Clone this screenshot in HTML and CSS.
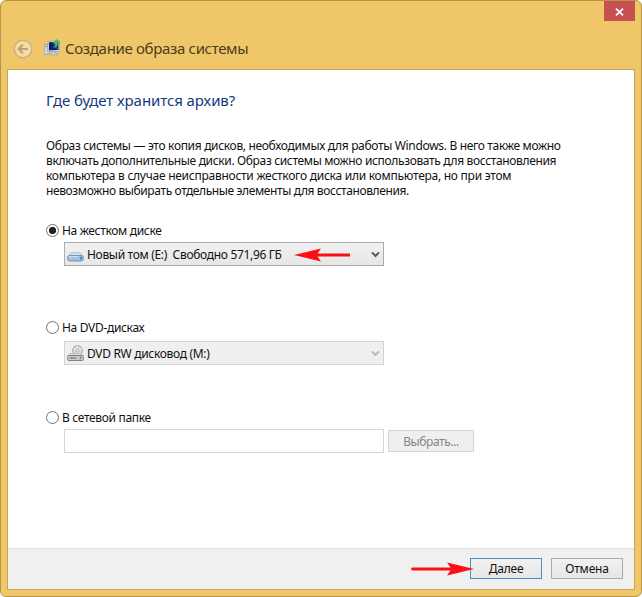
FILE: index.html
```html
<!DOCTYPE html>
<html lang="ru">
<head>
<meta charset="utf-8">
<title>Создание образа системы</title>
<link rel="stylesheet" href="styles.css">
</head>
<body>
<div class="window">
  <div class="caption">
    <button class="close" aria-label="Закрыть"><svg width="9" height="8" viewBox="0 0 9 8"><path d="M1 .7 8 7.3M8 .7 1 7.3" stroke="#fff" stroke-width="1.8"/></svg></button>
  </div>
  <header class="header">
    <svg class="back" width="20" height="20" viewBox="0 0 20 20"><circle cx="10" cy="10" r="8.8" fill="#f5dba0" stroke="#c9b184" stroke-width="1.5"/><path d="M15 10H6M9.8 5.8 5.6 10l4.2 4.2" fill="none" stroke="#b9a27a" stroke-width="2"/></svg>
    <svg class="app-icon" width="17" height="17" viewBox="0 0 17 17"><path d="M.8 5.5h3v10h-3z" fill="#dfe5e7" stroke="#8c9cab" stroke-width=".8"/><path d="M1.5 7.5h1.7" stroke="#557" stroke-width=".7"/><path d="M4 2.5 15.5 1.5v10.8L4 12.5z" fill="#dbe5ee" stroke="#8ca0b8" stroke-width=".7"/><path d="M5 3.5 14.5 2.7v8.2L5 11.2z" fill="#1538a0"/><path d="M5 3.5 9 3.2 12.5 11 5 11.2z" fill="#0b2170"/><path d="M8 12.5h3.5v2H14v1.6H5.5v-1.6H8z" fill="#c7d0d8" stroke="#8c9cab" stroke-width=".5"/><path d="M9.2 8.5C11 8 11.2 6.500 11.100 4.600H8.800L12.500.4l3.400 3.500h-2.200C13.800 7 12.500 8.800 9.200 8.500z" fill="#50c33c" stroke="#2f9634" stroke-width=".4"/></svg>
    <span class="title">Создание образа системы</span>
  </header>
  <main class="panel">
    <div class="content">
      <h1 class="heading">Где будет хранится архив?</h1>
      <p class="text">
        <span class="line l1">Образ системы — это копия дисков, необходимых для работы Windows. В него также можно</span>
        <span class="line l2">включать дополнительные диски. Образ системы можно использовать для восстановления</span>
        <span class="line l3">компьютера в случае неисправности жесткого диска или компьютера, но при этом</span>
        <span class="line l4">невозможно выбирать отдельные элементы для восстановления.</span>
      </p>
      <section class="option hard">
        <div class="choice"><i class="radio checked"></i><span class="label">На жестком диске</span></div>
        <div class="combo">
          <svg class="drive" width="17" height="17" viewBox="0 0 17 17"><path d="M4 6.800h9l3 4H1z" fill="#d5e4ef" stroke="#9bb3c8" stroke-width=".8"/><rect x=".7" y="9.500" width="15.600" height="5.500" rx="1.800" fill="#9fc3e4" stroke="#6c8dab" stroke-width=".9"/><path d="M2 10.700h9" stroke="#cfe5f6"/><path d="M14 10.800v2.800" stroke="#2f6f66" stroke-width="1.300"/></svg>
          <span class="value v1">Новый том (E:)&nbsp; Свободно 571,96 ГБ</span>
          <svg class="pointer left" width="57" height="14" viewBox="0 0 57 14"><path d="M0 7 27 .4 23.500 5.600H56v2.800H23.500L27 13.600z" fill="#fb0f14"/></svg>
          <svg class="chevron" width="9" height="7" viewBox="0 0 9 7"><path d="M1 1.300 4.500 5 8 1.300" fill="none" stroke="#555" stroke-width="1.900"/></svg>
        </div>
      </section>
      <section class="option dvd">
        <div class="choice"><i class="radio"></i><span class="label">На DVD-дисках</span></div>
        <div class="combo disabled">
          <svg class="drive" width="17" height="17" viewBox="0 0 17 17"><circle cx="10.500" cy="5.500" r="4.800" fill="#dedede" stroke="#999"/><path d="M10.500.8 9.500 5M11.500 6l3-3M6.500 3.500l3 2" stroke="#f8f8f8"/><circle cx="10.500" cy="5.500" r="1.500" fill="#fff" stroke="#888" stroke-width=".8"/><path d="M3 8.500h11l2 2.500H1z" fill="#ddd" stroke="#aaa" stroke-width=".6"/><rect x=".7" y="10.500" width="15.600" height="5" rx="1" fill="#ccc" stroke="#777" stroke-width=".9"/><path d="M2.500 13h7" stroke="#666"/><path d="M13.500 11.600v2.600" stroke="#50a650" stroke-width="1.500"/></svg>
          <span class="value v2">DVD RW дисковод (M:)</span>
          <svg class="chevron" width="9" height="7" viewBox="0 0 9 7"><path d="M1 1.300 4.500 5 8 1.300" fill="none" stroke="#b8b8b8" stroke-width="1.900"/></svg>
        </div>
      </section>
      <section class="option network">
        <div class="choice"><i class="radio"></i><span class="label">В сетевой папке</span></div>
        <div class="path-row"><div class="path"></div><button class="browse">Выбрать...</button></div>
      </section>
    </div>
    <footer class="footer">
      <button class="btn primary">Далее<svg class="pointer right" width="63" height="14" viewBox="0 0 63 14"><path d="M63 7 36 .4 39.500 5.600H1.500a1.400 1.400 0 0 0 0 2.800h38L36 13.600z" fill="#fb0f14"/></svg></button>
      <button class="btn">Отмена</button>
    </footer>
  </main>
</div>
</body>
</html>
```
FILE: styles.css
```css
* { box-sizing: border-box; }
body { margin: 0; background: #fff; font: 12px/15px "Noto Sans", "Open Sans", sans-serif; color: #111; }
button { font: inherit; padding: 0; }
svg { display: block; flex: none; }
.window { display: flex; flex-direction: column; width: 642px; height: 597px; padding: 0 6px 6px; border: 1px solid #b99549; border-radius: 6px; background: #efc769; }
.caption { display: flex; justify-content: flex-end; height: 20px; }
.close { display: flex; align-items: center; justify-content: center; width: 31px; height: 20px; border: 0; background: #c75050; }
.close svg { margin-top: 1px; }
.header { display: flex; align-items: center; height: 48px; padding: 6px 0 0 6px; }
.back { margin-top: 1px; }
.app-icon { margin: -1px 0 0 11px; }
.title { margin-left: 4px; font-size: 15px; line-height: 20px; letter-spacing: -.33px; color: #4a3d20; white-space: nowrap; }
.panel { display: flex; flex-direction: column; flex: 1; border: 1px solid #c8a655; background: #fff; }
.content { flex: 1; padding: 20px 0 0 38px; }
.heading { margin: 0; font-size: 15px; line-height: 20px; font-weight: 400; letter-spacing: -.08px; color: #143a7d; white-space: nowrap; }
.text { margin: 28px 0 0; }
.line { display: block; height: 15px; white-space: nowrap; }
.l1 { letter-spacing: -.33px; }
.l2 { letter-spacing: -.35px; }
.l3 { letter-spacing: -.26px; }
.l4 { letter-spacing: -.38px; }
.option { height: 90px; }
.hard { height: 97px; margin-top: 25px; }
.choice { display: flex; align-items: center; height: 15px; }
.radio { width: 13px; height: 13px; border: 1px solid #707070; border-radius: 50%; background: #fff; }
.checked { background: radial-gradient(circle, #222 3.300px, #fff 4px); }
.label { margin-left: 3px; letter-spacing: -.32px; white-space: nowrap; }
.combo { position: relative; display: flex; align-items: center; width: 320px; height: 24px; margin: 4px 0 0 18px; padding: 0 3px 0 2px; border: 1px solid #acacac; background: linear-gradient(#f1f1f1, #e6e6e6); }
.combo.disabled { border-color: #d4d4d4; background: #efefef; margin-top: 6px; }
.value { margin-left: 3px; letter-spacing: -.32px; white-space: nowrap; }
.chevron { margin-left: auto; }
.pointer { position: absolute; }
.left { left: 229px; top: 5px; }
.right { left: -60px; top: 3px; }
.path-row { display: flex; align-items: center; margin: 4px 0 0 18px; }
.path { width: 320px; height: 24px; border: 1px solid #d6d6d6; background: #fff; }
.browse { width: 86px; height: 22px; margin-left: 4px; border: 1px solid #d4d4d4; background: #efefef; letter-spacing: -.4px; color: #858585; }
.footer { display: flex; justify-content: flex-end; gap: 9px; height: 41px; padding: 9px 11px 0 0; border-top: 1px solid #dfdfdf; background: #f0f0f0; }
.btn { position: relative; width: 72px; height: 21px; border: 1px solid #acacac; background: linear-gradient(#f1f1f1, #e6e6e6); letter-spacing: -.2px; color: #111; }
.primary { border-color: #4a90c8; }
```
